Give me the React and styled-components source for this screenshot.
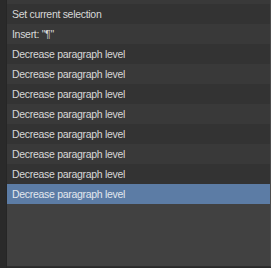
import React from 'react'
import styled, { createGlobalStyle } from 'styled-components'

const GlobalStyle = createGlobalStyle`
 html, body {
  margin: 0;
  padding: 0;
  background: #2a2a2a;
 }
`

const Panel = styled.div`
 width: 271px;
 height: 268px;
 display: flex;
 background: #2a2a2a;
 overflow: hidden;
 font-family: 'Liberation Sans', Arial, sans-serif;
`

const Gutter = styled.div`
 width: 6px;
 border-right: 1px solid #262626;
 flex-shrink: 0;
`

const List = styled.div`
 flex: 1;
 display: flex;
 flex-direction: column;
 background: #414141;
 border-right: 1px solid #4c4c4c;
 border-bottom: 1px solid #2e2e2e;
 margin-top: -16px;
 margin-bottom: 1px;
`

const Row = styled.div`
 height: 20px;
 flex-shrink: 0;
 display: flex;
 align-items: center;
 padding-left: 5px;
 font-size: 10.5px;
 letter-spacing: -0.3px;
 color: ${(p) => (p.selected ? '#e2e8f0' : '#d8d8d8')};
 background: ${(p) =>
  p.selected ? '#5c7ca5' : p.odd ? '#333333' : '#393939'};
 white-space: nowrap;
`

const items = [
 '',
 'Set current selection',
 'Insert: "¶"',
 'Decrease paragraph level',
 'Decrease paragraph level',
 'Decrease paragraph level',
 'Decrease paragraph level',
 'Decrease paragraph level',
 'Decrease paragraph level',
 'Decrease paragraph level',
 'Decrease paragraph level',
]

const App = () => {
 return (
  <>
   <GlobalStyle />
   <Panel>
    <Gutter />
    <List>
     {items.map((text, i) => (
      <Row key={i} odd={i % 2 === 1} selected={i === items.length - 1}>
       {text}
      </Row>
     ))}
    </List>
   </Panel>
  </>
 )
}

export default App
